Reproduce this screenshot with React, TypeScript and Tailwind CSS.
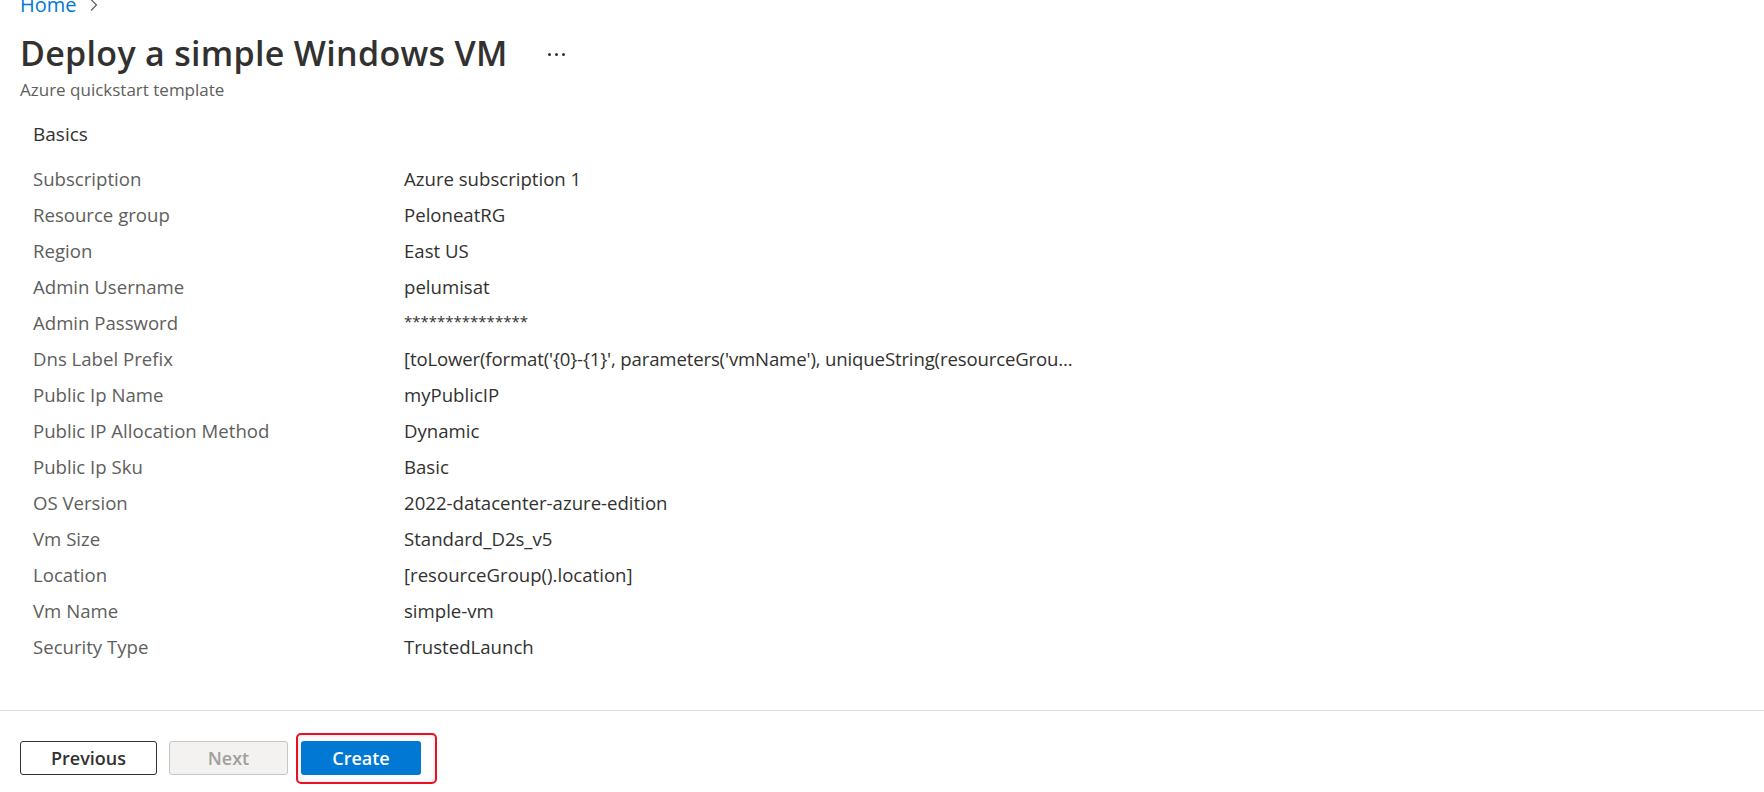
import React from "react";

const rows: [string, string][] = [
  ["Subscription", "Azure subscription 1"],
  ["Resource group", "PeloneatRG"],
  ["Region", "East US"],
  ["Admin Username", "pelumisat"],
  ["Admin Password", "***************"],
  ["Dns Label Prefix", "[toLower(format('{0}-{1}', parameters('vmName'), uniqueString(resourceGrou..."],
  ["Public Ip Name", "myPublicIP"],
  ["Public IP Allocation Method", "Dynamic"],
  ["Public Ip Sku", "Basic"],
  ["OS Version", "2022-datacenter-azure-edition"],
  ["Vm Size", "Standard_D2s_v5"],
  ["Location", "[resourceGroup().location]"],
  ["Vm Name", "simple-vm"],
  ["Security Type", "TrustedLaunch"],
];

function Value({ k, v }: { k: string; v: string }) {
  if (k === "Admin Password") {
    return <span className="text-[#323130] whitespace-nowrap text-[15px] -translate-y-[2px]">{v}</span>;
  }
  if (k === "Dns Label Prefix") {
    return <span className="text-[#323130] whitespace-nowrap tracking-[-0.15px]">{v}</span>;
  }
  return <span className="text-[#323130] whitespace-nowrap">{v}</span>;
}

export default function App() {
  return (
    <div className="w-[1764px] h-[792px] bg-white overflow-hidden font-['Open_Sans',sans-serif]">
      <div className="pl-[20px]">
        <div className="-mt-[7px] h-[24px] flex items-center text-[20px] text-[#0078d4]">
          <span>Home</span>
          <svg className="ml-[12px]" width="10" height="14" viewBox="0 0 10 14">
            <path d="M2 1.5 L7.5 7 L2 12.5" fill="none" stroke="#605e5c" strokeWidth="1.2" />
          </svg>
        </div>
        <div className="mt-[16px] h-[40px] flex items-center">
          <h1 className="text-[34px] font-semibold text-[#323130] leading-[40px] tracking-[0.3px]">
            Deploy a simple Windows VM
          </h1>
          <div className="ml-[40px] flex items-center gap-[4px] mt-[2px]">
            <span className="w-[3px] h-[3px] bg-[#323130] rounded-full" />
            <span className="w-[3px] h-[3px] bg-[#323130] rounded-full" />
            <span className="w-[3px] h-[3px] bg-[#323130] rounded-full" />
          </div>
        </div>
        <div className="mt-[6px] h-[22px] leading-[22px] text-[17px] text-[#605e5c]">
          Azure quickstart template
        </div>
      </div>

      <div className="pl-[33px]">
        <div className="mt-[19px] h-[28px] leading-[28px] text-[19px] text-[#323130]">Basics</div>
        <div className="mt-[13px] flex flex-col">
          {rows.map(([k, v]) => (
            <div key={k} className="h-[36px] grid grid-cols-[371px_1fr] items-center text-[18.6px] leading-[36px]">
              <span className="text-[#605e5c]">{k}</span>
              <Value k={k} v={v} />
            </div>
          ))}
        </div>
      </div>

      <div className="mt-[45px] h-px bg-[#e1dfdd]" />

      <div className="mt-[30px] pl-[20px] flex items-center">
        <button className="w-[137px] h-[34px] border border-[#323130] rounded-[3px] bg-white text-[18px] font-semibold text-[#323130] flex items-center justify-center">
          Previous
        </button>
        <button className="ml-[12px] w-[119px] h-[34px] border border-[#c8c6c4] rounded-[3px] bg-[#f3f2f1] text-[18px] font-semibold text-[#a19f9d] flex items-center justify-center">
          Next
        </button>
        <div className="ml-[13px] relative">
          <div className="absolute -left-[5px] -right-[16px] -top-[8px] -bottom-[9px] border-2 border-[#e81123] rounded-[5px] shadow-[inset_0_0_4px_rgba(0,0,0,0.15)]" />
          <button className="relative w-[120px] h-[34px] rounded-[3px] bg-[#0078d4] text-[18px] font-semibold text-white flex items-center justify-center">
            Create
          </button>
        </div>
      </div>
    </div>
  );
}
